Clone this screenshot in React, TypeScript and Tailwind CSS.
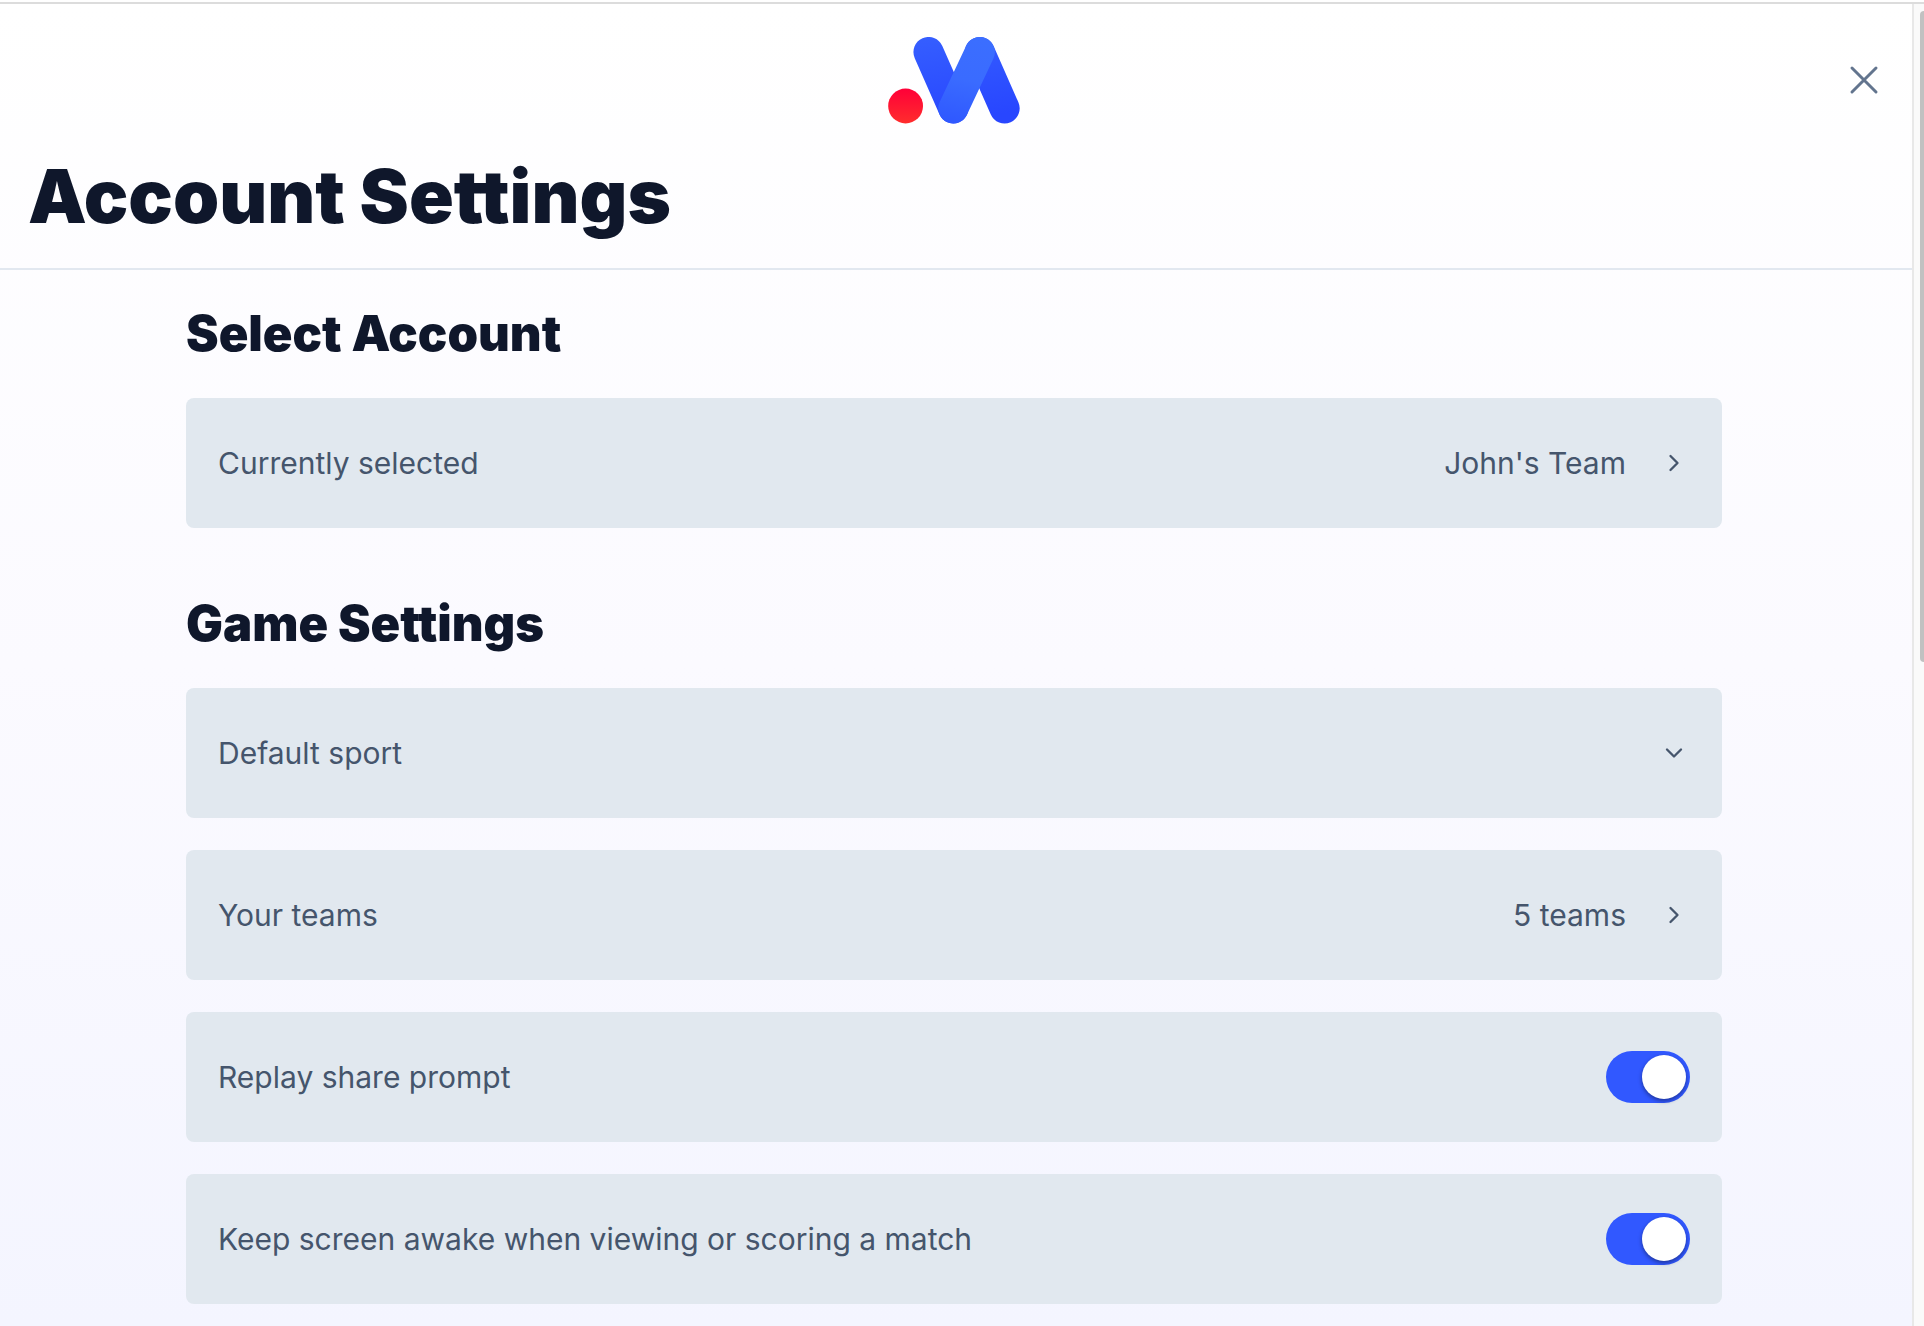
import { useId, useState } from "react";
import { ChevronDown, ChevronRight } from "lucide-react";

const Logo = () => (
  <svg viewBox="84 51 394 259" className="w-[132px]" role="img" aria-label="Home">
    <defs>
      <linearGradient id="dot" x1="0" y1="0" x2="0" y2="1">
        <stop offset="0" stopColor="#ff0038" />
        <stop offset="1" stopColor="#ff2d2d" />
      </linearGradient>
      <linearGradient id="side" gradientUnits="userSpaceOnUse" x1="200" y1="51" x2="240" y2="309">
        <stop offset="0" stopColor="#355eff" />
        <stop offset="1" stopColor="#2846ff" />
      </linearGradient>
      <linearGradient id="middle" gradientUnits="userSpaceOnUse" x1="340" y1="51" x2="290" y2="309">
        <stop offset="0" stopColor="#3b6eff" />
        <stop offset="0.5" stopColor="#3a6bff" />
        <stop offset="1" stopColor="#2f58ff" />
      </linearGradient>
    </defs>
    <circle cx="136.5" cy="257" r="52" fill="url(#dot)" />
    <g fill="none" strokeWidth="90" strokeLinecap="round">
      <path d="M205 96 279 264" stroke="url(#side)" />
      <path d="M358 96 432 264" stroke="url(#side)" />
      <path d="M358 96 279 264" stroke="url(#middle)" />
    </g>
  </svg>
);

const rowClass = "flex w-full items-center justify-between rounded-lg bg-[#e1e8ef] px-8 h-[130px] text-left text-[30px] leading-10 text-slate-600";
const headingClass = "mb-9 text-[49px] leading-14 font-black text-slate-900";

const LinkRow = ({ label, value }: { label: string; value: string }) => (
  <button type="button" className={rowClass}>
    <span>{label}</span>
    <span className="flex items-center gap-8">
      {value}
      <span className="flex size-8 items-center justify-center">
        <ChevronRight size={28} />
      </span>
    </span>
  </button>
);

const SelectRow = ({ label }: { label: string }) => {
  const id = useId();

  return (
    <div className={rowClass}>
      <label htmlFor={id}>{label}</label>
      <div className="relative flex h-10 w-96 items-center justify-end">
        <select id={id} defaultValue="" className="absolute inset-0 w-full appearance-none bg-transparent">
          <option value=""></option>
        </select>
        <span className="pointer-events-none flex size-8 items-center justify-center">
          <ChevronDown size={28} />
        </span>
      </div>
    </div>
  );
};

const ToggleRow = ({ label }: { label: string }) => {
  const id = useId();
  const [on, setOn] = useState(true);

  return (
    <div className={rowClass}>
      <label htmlFor={id}>{label}</label>
      <input
        id={id}
        type="checkbox"
        role="switch"
        checked={on}
        onChange={(e) => setOn(e.target.checked)}
        className="flex h-[52px] w-[84px] cursor-pointer appearance-none items-center rounded-full bg-slate-400 p-1 before:size-11 before:rounded-full before:bg-white before:shadow-[0_2px_4px_rgba(0,0,0,0.4)] checked:justify-end checked:bg-[#3158ff]"
      />
    </div>
  );
};

const App = () => {
  return (
    <div className="flex h-screen flex-col overflow-hidden font-['Inter',sans-serif]">
      <div className="mt-0.5 h-0.5 shrink-0 bg-[#dcdcdc]" />
      <div className="flex min-h-0 flex-1">
        <div className="min-w-0 flex-1 overflow-hidden bg-linear-to-b from-white via-[#fbfaff] to-[#f4f5ff]">
          <header className="relative border-b-2 border-slate-200 pt-[33px] pr-1 pb-7">
            <div className="flex justify-center">
              <Logo />
            </div>
            <button type="button" aria-label="Close" className="absolute top-[52px] right-6 text-slate-500">
              <svg viewBox="0 0 24 24" className="size-12" fill="none" stroke="currentColor" strokeWidth="1.5" strokeLinecap="round">
                <path d="M6 18 18 6M6 6l12 12" />
              </svg>
            </button>
            <h1 className="mt-7 px-7 text-[74px] leading-[88px] font-black text-slate-900">Account Settings</h1>
          </header>

          <main className="mx-auto max-w-[1540px] pr-1">
            <section className="pt-9">
              <h2 className={headingClass}>Select Account</h2>
              <LinkRow label="Currently selected" value="John's Team" />
            </section>
            <section className="pt-[68px]">
              <h2 className={headingClass}>Game Settings</h2>
              <div className="flex flex-col gap-8">
                <SelectRow label="Default sport" />
                <LinkRow label="Your teams" value="5 teams" />
                <ToggleRow label="Replay share prompt" />
                <ToggleRow label="Keep screen awake when viewing or scoring a match" />
              </div>
            </section>
          </main>
        </div>
        <div className="w-3 shrink-0 border-l-2 border-[#e8e8e8] bg-[#fafafa] pt-[7px] pl-1.5">
          <div className="h-[49.5%] rounded-l-lg bg-[#c1c1c1]" />
        </div>
      </div>
    </div>
  );
};

export default App;
